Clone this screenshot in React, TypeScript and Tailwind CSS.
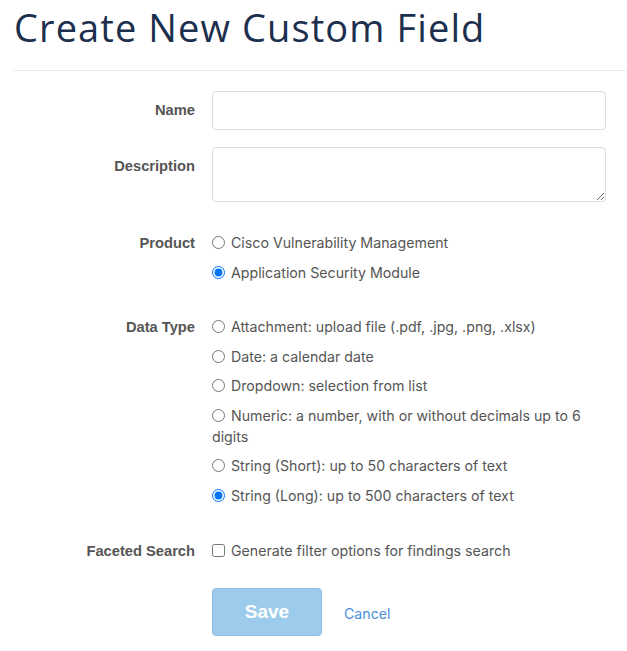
import type { ReactNode } from "react";

const body = "font-['Inter','Liberation_Sans',sans-serif]";

function Row({ label, children, labelPad = "pt-[9px]", className = "" }: { label: string; children: ReactNode; labelPad?: string; className?: string }) {
  return (
    <div className={`flex ${className}`}>
      <div className={`w-[181px] shrink-0 text-right font-['Liberation_Sans',Arial,sans-serif] text-[14.7px] font-bold leading-[21px] text-[#555] ${labelPad}`}>
        {label}
      </div>
      <div className="ml-[17px] mr-[21px] flex-1">{children}</div>
    </div>
  );
}

function Option({ type = "radio", name, label, checked = false }: { type?: "radio" | "checkbox"; name: string; label: string; checked?: boolean }) {
  return (
    <label className={`block text-[14.2px] leading-[21px] text-[#555] ${body}`}>
      <input
        type={type}
        name={name}
        defaultChecked={checked}
        className="m-0 mr-[6px] inline-block h-[13px] w-[13px] align-[-1px]"
      />
      {label}
    </label>
  );
}

export default function App() {
  return (
    <div className="min-h-screen bg-white pl-[14px]">
      <h1 className="m-0 pt-[2px] font-['Open_Sans',sans-serif] text-[38px] font-normal leading-[50px] tracking-[1.1px] text-[#1c2f4e]">
        Create New Custom Field
      </h1>
      <hr className="mt-[18px] border-0 border-t border-[#eaeaea]" />

      <form className="pt-[20px]">
        <Row label="Name" className="mb-[17px]">
          <input type="text" className="block h-[39px] w-full rounded-[4px] border border-[#dcdcdc] px-3 outline-none" />
        </Row>

        <Row label="Description" className="mb-[30px]">
          <textarea className="block h-[55px] w-full rounded-[4px] border border-[#dcdcdc] px-3 py-2 outline-none" />
        </Row>

        <Row label="Product" labelPad="pt-[1px]" className="mb-[33px]">
          <div className="flex flex-col gap-[9px]">
            <Option name="product" label="Cisco Vulnerability Management" />
            <Option name="product" label="Application Security Module" checked />
          </div>
        </Row>

        <Row label="Data Type" labelPad="pt-[1px]" className="mb-[34px]">
          <div className="flex flex-col gap-[8.5px]">
            <Option name="dtype" label="Attachment: upload file (.pdf, .jpg, .png, .xlsx)" />
            <Option name="dtype" label="Date: a calendar date" />
            <Option name="dtype" label="Dropdown: selection from list" />
            <Option name="dtype" label="Numeric: a number, with or without decimals up to 6 digits" />
            <Option name="dtype" label="String (Short): up to 50 characters of text" />
            <Option name="dtype" label="String (Long): up to 500 characters of text" checked />
          </div>
        </Row>

        <Row label="Faceted Search" labelPad="pt-[1px]" className="mb-[26px]">
          <Option type="checkbox" name="faceted" label="Generate filter options for findings search" />
        </Row>

        <div className="flex items-center pl-[198px]">
          <button
            type="button"
            className="h-[48px] w-[110px] rounded-[4px] border border-[#8cbde0] bg-[#9ccbec] pt-[2px] font-['Liberation_Sans',Arial,sans-serif] text-[19px] font-bold text-white"
          >
            Save
          </button>
          <a className={`ml-[22px] mt-[4px] text-[14.2px] text-[#4a90d9] ${body}`}>Cancel</a>
        </div>
      </form>
    </div>
  );
}
